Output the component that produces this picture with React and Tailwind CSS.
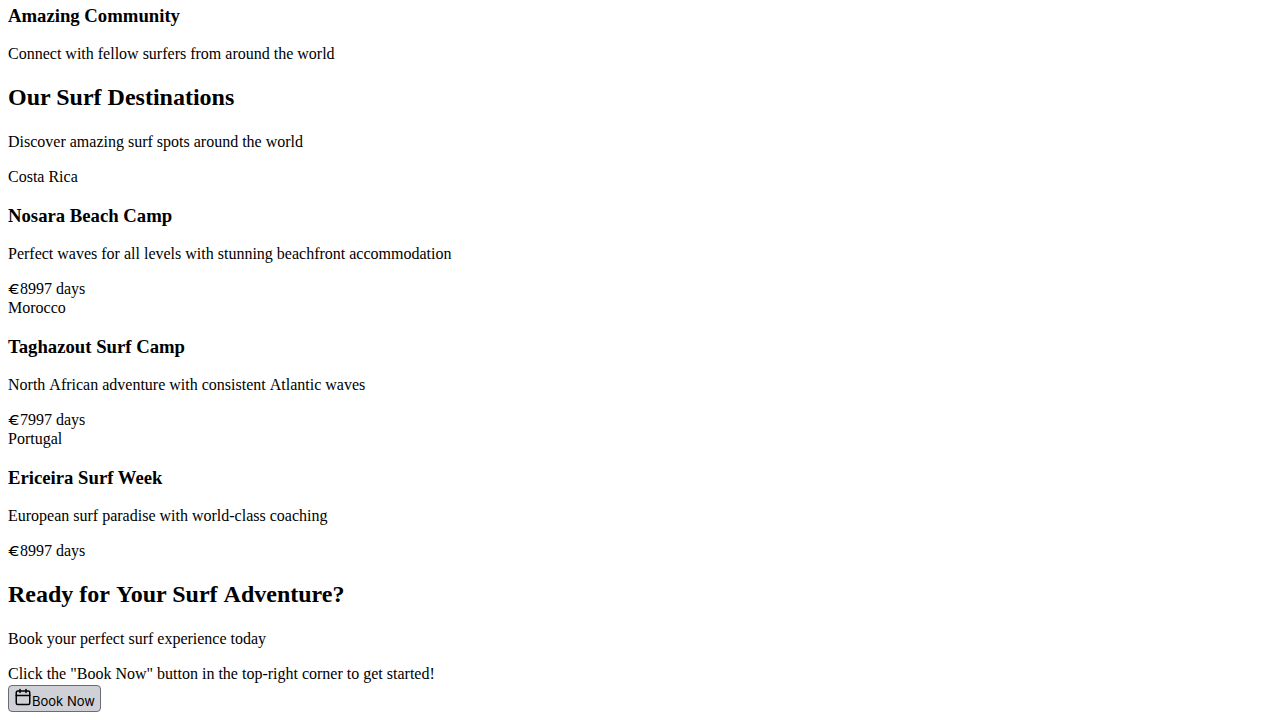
import React from "react";
import { Calendar } from "lucide-react";

const destinations = [
  { place: "Costa Rica", name: "Nosara Beach Camp", text: "Perfect waves for all levels with stunning beachfront accommodation", price: "899", length: "7 days" },
  { place: "Morocco", name: "Taghazout Surf Camp", text: "North African adventure with consistent Atlantic waves", price: "799", length: "7 days" },
  { place: "Portugal", name: "Ericeira Surf Week", text: "European surf paradise with world-class coaching", price: "899", length: "7 days" },
];

// Keeps full-width spaces in front of capitals that would otherwise be kerned.
function Spaced({ children }) {
  return children.split(/( )(?=[AY])/).map((part, i) =>
    i % 2 ? <span key={i} className="[font-kerning:none]">{part}</span> : part
  );
}

function Destination({ place, name, text, price, length }) {
  return (
    <article>
      <div className="h-[19px]">{place}</div>
      <h3 className="mt-[18px] h-[21px] text-[18.72px] leading-[21px] font-bold">{name}</h3>
      <p className="mt-[19px] h-[18px]"><Spaced>{text}</Spaced></p>
      <div className="mt-[17px] flex h-[19px]">
        <span className="w-3 shrink-0"><span className="inline-block origin-left scale-x-[1.3] font-['Inter',sans-serif] text-[13.5px] leading-[18px] font-normal">€</span></span>
        <span>{price}</span>
        <span>{length}</span>
      </div>
    </article>
  );
}

export default function App() {
  return (
    <main className="h-[720px] overflow-hidden bg-white px-2 pt-[5px] font-['Liberation_Serif',serif] text-[16px] leading-[18px] text-black">
      <h3 className="h-[21px] text-[18.72px] leading-[21px] font-bold">Amazing Community</h3>
      <p className="mt-[19px] h-[18px]">Connect with fellow surfers from around the world</p>
      <h2 className="mt-[21px] h-[27px] text-[24px] leading-[27px] font-bold">Our Surf Destinations</h2>
      <p className="mt-[22px] h-[18px]">Discover amazing surf spots around the world</p>
      <div className="mt-[17px]">
        {destinations.map((item) => (
          <Destination key={item.place} {...item} />
        ))}
      </div>
      <h2 className="mt-5 h-[27px] text-[24px] leading-[27px] font-bold"><Spaced>Ready for Your Surf Adventure?</Spaced></h2>
      <p className="mt-[22px] h-[18px]">Book your perfect surf experience today</p>
      <p className="mt-[17px] h-[18px]">Click the "Book Now" button in the top-right corner to get started!</p>
      <button className="mt-[2px] flex h-[27px] w-[93px] rounded-[4px] border border-[#6b6b76] bg-[#d0d0d7] pl-[5px] pt-[2px] font-['Inter',sans-serif] text-[13px] leading-[15px]">
        <Calendar className="size-[18px] shrink-0" strokeWidth={2} />
        <span className="mt-[6px] whitespace-nowrap">Book Now</span>
      </button>
    </main>
  );
}
